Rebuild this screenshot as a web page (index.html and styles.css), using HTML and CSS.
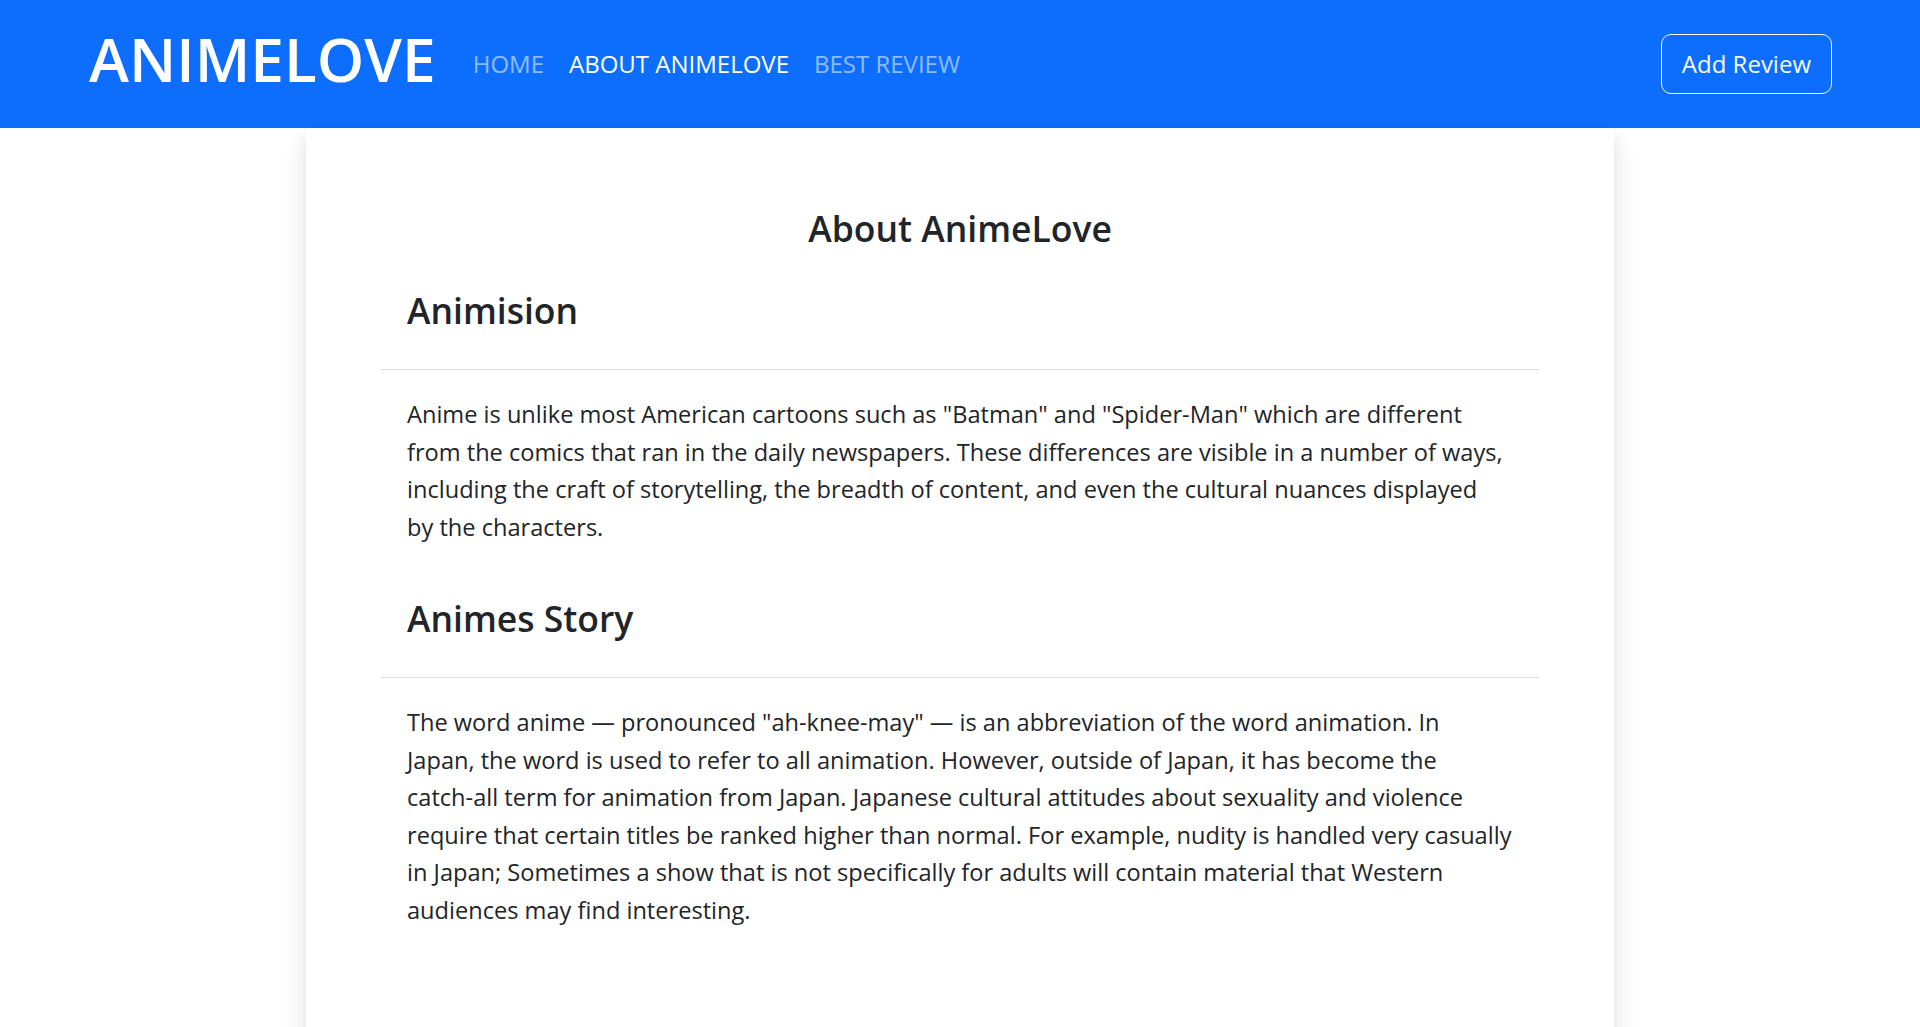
FILE: index.html
```html
<!DOCTYPE html>
<html lang="en">
<head>
<meta charset="utf-8">
<title>AnimeLove - About</title>
<link rel="stylesheet" href="styles.css">
</head>
<body>
<header class="navbar">
  <a class="brand" href="#">ANIMELOVE</a>
  <nav class="nav">
    <a class="nav-link" href="#">HOME</a>
    <a class="nav-link active" href="#">ABOUT ANIMELOVE</a>
    <a class="nav-link" href="#">BEST REVIEW</a>
  </nav>
  <a class="btn-outline" href="#">Add Review</a>
</header>
<main class="card">
  <h1 class="card-title">About AnimeLove</h1>
  <section class="section">
    <h2 class="section-title">Animision</h2>
    <hr class="divider">
    <p class="section-text">Anime is unlike most American cartoons such as "Batman" and "Spider-Man" which are different<br>
    from the comics that ran in the daily newspapers. These differences are visible in a number of ways,<br>
    including the craft of storytelling, the breadth of content, and even the cultural nuances displayed<br>
    by the characters.</p>
  </section>
  <section class="section">
    <h2 class="section-title">Animes Story</h2>
    <hr class="divider">
    <p class="section-text">The word anime — pronounced "ah-knee-may" — is an abbreviation of the word animation. In<br>
    Japan, the word is used to refer to all animation. However, outside of Japan, it has become the<br>
    catch-all term for animation from Japan. Japanese cultural attitudes about sexuality and violence<br>
    require that certain titles be ranked higher than normal. For example, nudity is handled very casually<br>
    in Japan; Sometimes a show that is not specifically for adults will contain material that Western<br>
    audiences may find interesting.</p>
  </section>
</main>
</body>
</html>
```
FILE: styles.css
```css
* { box-sizing: border-box; }

html, body {
  margin: 0;
  padding: 0;
  background: #ffffff;
}

body {
  font-family: "Open Sans", "Noto Sans", sans-serif;
  color: #212529;
}

a { text-decoration: none; }

.navbar {
  display: flex;
  align-items: center;
  height: 128px;
  padding: 0 88px 0 89px;
  background: #0d6efd;
}

.brand {
  font-size: 60.4px;
  font-weight: 600;
  line-height: 72px;
  color: #ffffff;
  margin-right: 24.5px;
  padding-bottom: 10px;
}

.nav {
  display: flex;
  flex: 1;
}

.nav-link {
  font-size: 24px;
  line-height: 37.5px;
  padding: 0 12.5px;
  color: rgba(255, 255, 255, 0.55);
}

.nav-link.active {
  color: #ffffff;
}

.btn-outline {
  font-size: 24px;
  line-height: 37.5px;
  padding: 10px 20px;
  border: 1px solid #f8f9fa;
  border-radius: 10px;
  color: #f8f9fa;
}

.card {
  display: block;
  width: 1308px;
  margin: 0 auto;
  padding: 76px 75px 75px;
  background: #ffffff;
  box-shadow: 0 10px 20px rgba(0, 0, 0, 0.15);
}

.card-title {
  margin: 0 0 34px;
  font-size: 35.5px;
  font-weight: 600;
  line-height: 48px;
  text-align: center;
}

.section-title {
  margin: 0;
  padding: 0 26px;
  font-size: 35.5px;
  font-weight: 600;
  line-height: 48px;
}

.divider {
  margin: 35px 0 26px;
  border: 0;
  border-top: 1px solid #dcdde0;
}

.section-text {
  margin: 0 0 48px;
  padding: 0 4px 0 26px;
  font-size: 23.6px;
  line-height: 37.5px;
}
```
